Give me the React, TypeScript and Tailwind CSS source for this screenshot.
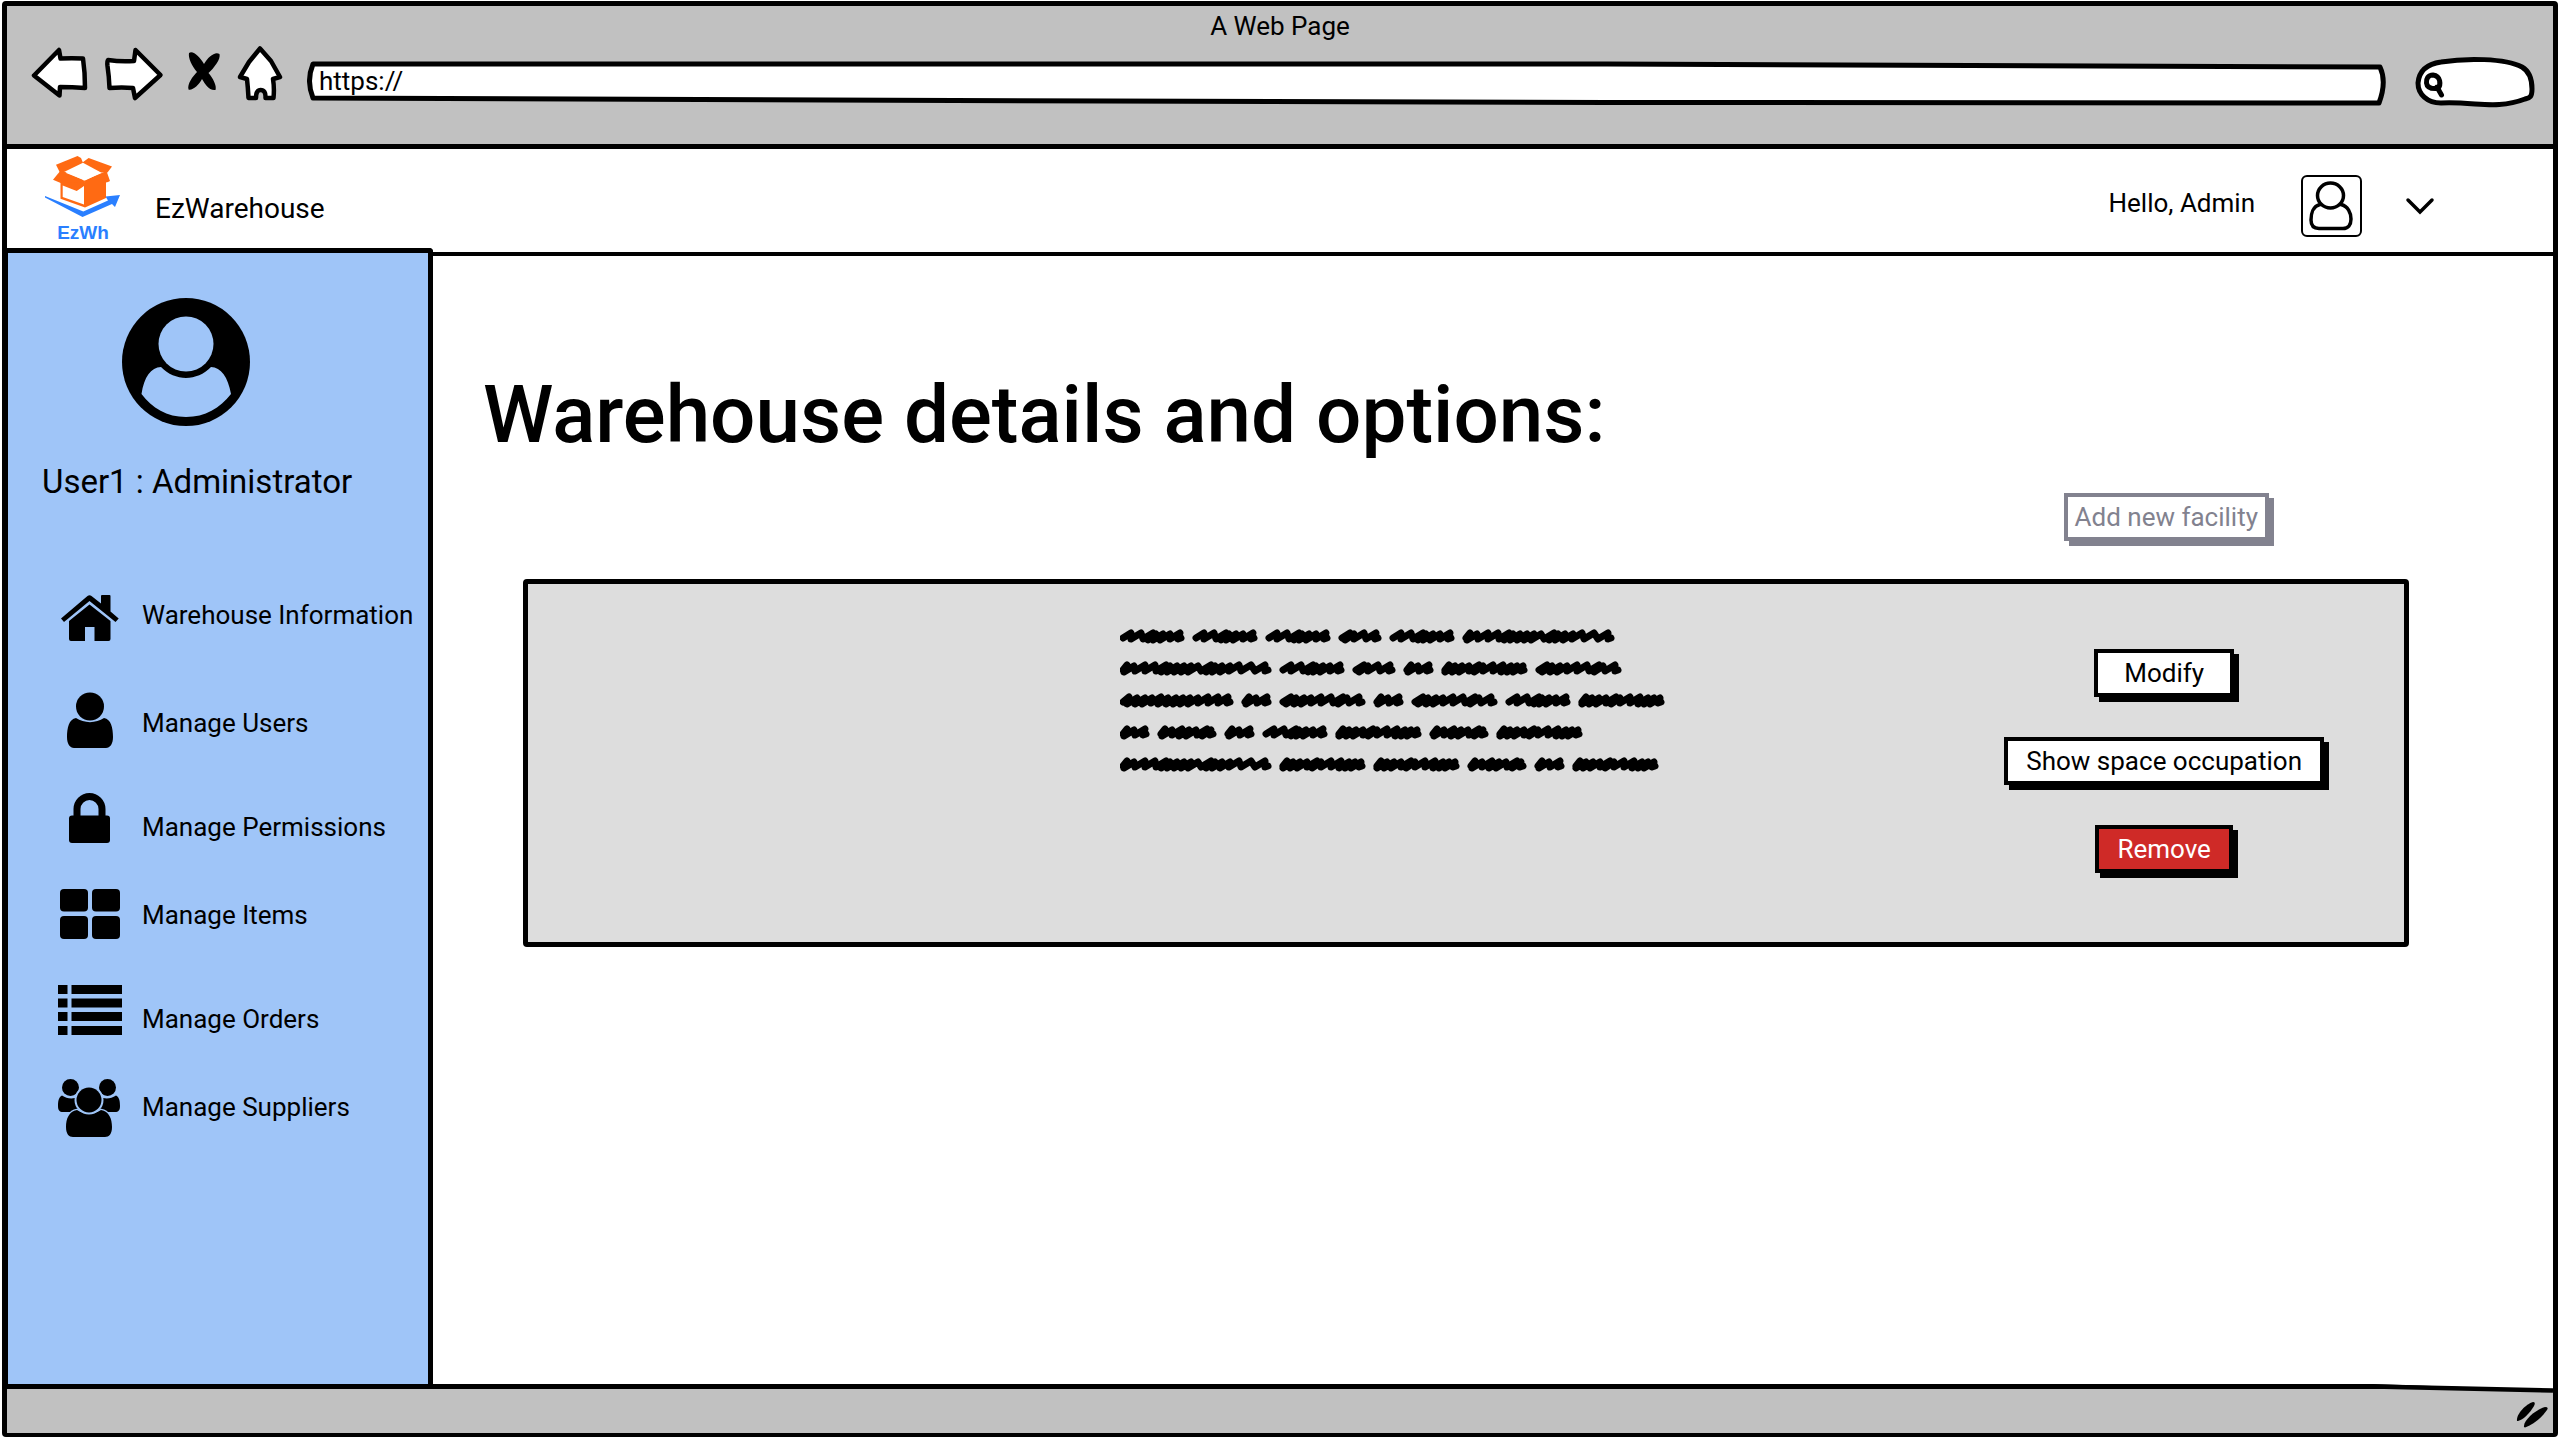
import type { ReactNode } from "react";

/* ---------- browser toolbar drawings ---------- */

function BackIcon() {
  return (
    <svg viewBox="31 44 60 64" className="h-16 w-[60px]" aria-hidden="true">
      <path d="M34 75.5 L59 50 L60.5 58.5 Q72 58 83 58.5 Q85 72 85 88 Q72 87 60 87 L59.500 95.500 Z" fill="#fff" stroke="#000" strokeWidth="4.500" strokeLinejoin="round" />
    </svg>
  );
}

function ForwardIcon() {
  return (
    <svg viewBox="103 44 64 64" className="h-16 w-16" aria-hidden="true">
      <path d="M108 60 Q121 62 134 61 L135.500 50 L160.500 75 L135 98 L133 88 Q122 87 109.500 88 Q109 76 107.500 66 Q107 61 108 60 Z" fill="#fff" stroke="#000" strokeWidth="4.500" strokeLinejoin="round" />
    </svg>
  );
}

function StopIcon() {
  return (
    <svg viewBox="179 44 44 64" className="h-16 w-11" aria-hidden="true">
      <path d="M189 53 C193 50 200 57 204 64 C208 57 215 51 219.500 54 C221 59 214 68 208.500 73 C213 78 217 86 215.500 90 C209 91 205 84 202 79 C199 85 192 91 188.500 89.500 C187 84 193 76 197 72 C192 66 188 58 189 53 Z" fill="#000" />
    </svg>
  );
}

function HomeIcon() {
  return (
    <svg viewBox="235 44 52 64" className="h-16 w-13" aria-hidden="true">
      <path d="M260 48.500 L271 61 L280 77 L273 79 Q274.500 88 273.500 98 L265.500 98 Q266 90 260.500 90 Q256 90 256 98 L248.500 98 Q248 88 247 79 L240 77 L249 62 Z" fill="#fff" stroke="#000" strokeWidth="4.500" strokeLinejoin="round" />
    </svg>
  );
}

function ToolbarButton({ label, children }: { label: string; children: ReactNode }) {
  return (
    <button type="button" aria-label={label} className="block">
      {children}
    </button>
  );
}

function BrowserBar() {
  return (
    <div className="border-b-[5px] border-black bg-[#c1c1c1] pt-1 pb-9">
      <div className="text-center text-[26px] leading-8">A Web Page</div>
      <div className="mt-0.5 flex gap-3 pr-4 pl-6">
        <ToolbarButton label="Back"><BackIcon /></ToolbarButton>
        <ToolbarButton label="Forward"><ForwardIcon /></ToolbarButton>
        <ToolbarButton label="Stop"><StopIcon /></ToolbarButton>
        <ToolbarButton label="Home"><HomeIcon /></ToolbarButton>
        <div className="relative mr-4 ml-2 h-16 flex-1">
          <svg viewBox="0 0 2080 64" preserveAspectRatio="none" className="absolute inset-0 h-full w-full" aria-hidden="true">
            <path d="M6 20 L1300 20 L2073 23 Q2080 38 2072 59 L1300 58.500 L800 57 L6 54 Q-1 37 6 20 Z" fill="#fff" stroke="#000" strokeWidth="5" strokeLinejoin="round" vectorEffect="non-scaling-stroke" />
          </svg>
          <input aria-label="Address" defaultValue="https://" className="relative block h-16 w-full bg-transparent px-3 pt-[10px] text-[26px] outline-none" />
        </div>
        <div className="relative h-16 w-[122px]">
          <svg viewBox="0 0 122 64" className="absolute inset-0" aria-hidden="true">
            <path d="M26 59 C12 59 3 50 3 39 C4 27 12 20 26 18 C50 14 90 14 107 23 C114 27 117 36 117 45 C117 54 114 54 110 55 C92 62 76 61 60 60 C48 59 36 58 26 59 Z" fill="#fff" stroke="#000" strokeWidth="5" strokeLinejoin="round" />
            <path d="M18 31 C13 31 11 35 11.500 39 C12 44 17 45 23 44.500 C26 41 26 32 18 31 Z M22 43 L26.500 51" fill="none" stroke="#000" strokeWidth="5" strokeLinecap="round" strokeLinejoin="round" />
          </svg>
          <input type="search" aria-label="Search" className="relative block h-16 w-full bg-transparent pt-[10px] pr-3 pl-8 text-xl outline-none" />
        </div>
      </div>
    </div>
  );
}

/* ---------- application header ---------- */

function Logo() {
  return (
    <div className="ml-9 w-20">
      <svg viewBox="43 153 80 64" className="block h-16 w-20" aria-hidden="true">
        <g fill="#ff6a13">
          <path d="M56 164.700 L77.500 156 L81 158 L83 162.700 L65 171.500 L60 172.700 Z" />
          <path d="M88.600 158 L112 166.500 L107.500 172.500 L101 172.500 L82.500 162.500 Z" />
          <path d="M61 170 L83.500 180 L85 184 L76.700 189.700 L53 179.700 Z" />
          <path d="M84 180.500 L106.500 171 L110 181 L108 182 L106 182.500 V198 L85 207.500 Z" />
          <path d="M60.500 182 V198.700 L85 207.500 V183 Z" />
        </g>
        <path d="M84 165.500 L101 172.700 L85 180.500 L65.500 172.700 Z" fill="#fff" />
        <path d="M62.700 185.500 L76.700 191 L84 186 V204.500 L62.700 197 Z" fill="#fff" />
        <path d="M45 196 L83.300 211.500 L108 200.500 L105.500 196.500 L120 195 L115 207 L112 204 L82.500 217 L45 197.500 Z" fill="#2a7fff" />
      </svg>
      <div className="mt-1 text-center font-['Liberation_Sans'] text-[19px] leading-6 font-bold text-[#2a7fff]">EzWh</div>
    </div>
  );
}

function AppHeader() {
  return (
    <header className="flex h-[99px] items-center">
      <Logo />
      <div className="mt-5 ml-8 text-[28px] leading-8">EzWarehouse</div>
      <div className="mr-[118px] ml-auto flex items-center pt-[15px]">
        <div className="pb-[7px] text-[26px] leading-8">Hello, Admin</div>
        <button type="button" aria-label="Profile" className="ml-[46px] rounded-md border-2 border-black">
          <svg viewBox="2304 177 57 58" className="block h-[58px] w-[57px]" fill="#fff" stroke="#000" strokeWidth="3.500" aria-hidden="true">
            <path d="M2321 204.500 C2314 206 2312 214 2312 220 C2312 226 2315 228.500 2320 228.500 H2344 C2349 228.500 2352 225 2352 219 C2352 213 2349 206 2342 204.500 Z" />
            <ellipse cx="2331.500" cy="195.500" rx="13" ry="12.500" />
          </svg>
        </button>
        <button type="button" aria-label="Open user menu" className="ml-[43px]">
          <svg viewBox="0 0 30 20" className="block h-5 w-[30px]" fill="none" stroke="#000" strokeWidth="3.500" strokeLinecap="round" aria-hidden="true">
            <path d="M3 4 L15 16 L27 4" />
          </svg>
        </button>
      </div>
    </header>
  );
}

/* ---------- sidebar ---------- */

const navItems: { label: string; gap: string; viewBox: string; icon: ReactNode }[] = [
  {
    label: "Warehouse Information",
    gap: "",
    viewBox: "54 579 72 72",
    icon: (
      <>
        <path d="M61 618.500 L87.500 596 Q89.500 594.500 91.500 596 L101 603.500 V596 Q101 595 102 595 H109.500 Q110.500 595 110.500 596 V611.500 L118.700 618.500 L115.500 622 L89.500 601 L64 622 Z" />
        <path d="M89.500 604.500 L110.500 621 V639 Q110.500 641 108.500 641 H94.500 V627 H85 V641 H71 Q69 641 69 639 V621 Z" />
      </>
    ),
  },
  {
    label: "Manage Users",
    gap: "mt-9",
    viewBox: "54 687 72 72",
    icon: (
      <>
        <circle cx="90" cy="706.500" r="14" />
        <path d="M76 718 C69 719 67 728 67 737 C67 744 70 748 74 748 H106 C110 748 113 744 113 737 C113 728 111 719 104 718 C96 723.500 84 723.500 76 718 Z" />
      </>
    ),
  },
  {
    label: "Manage Permissions",
    gap: "mt-8",
    viewBox: "54 791 72 72",
    icon: (
      <>
        <rect x="69" y="815.500" width="41" height="27.500" rx="3" />
        <path d="M77 818 V809 A12.500 12.500 0 0 1 102 809 V818" fill="none" stroke="#000" strokeWidth="7" />
      </>
    ),
  },
  {
    label: "Manage Items",
    gap: "mt-4",
    viewBox: "54 879 72 72",
    icon: (
      <>
        <rect x="60" y="889" width="28" height="22.500" rx="4" />
        <rect x="92" y="889" width="28" height="22.500" rx="4" />
        <rect x="60" y="916" width="28" height="23" rx="4" />
        <rect x="92" y="916" width="28" height="23" rx="4" />
      </>
    ),
  },
  {
    label: "Manage Orders",
    gap: "mt-8",
    viewBox: "54 983 72 72",
    icon: (
      <path d="M58 985 h9.500 v9 h-9.500 Z M71.500 985 h50.500 v9 h-50.500 Z M58 998.500 h9.500 v9 h-9.500 Z M71.500 998.500 h50.500 v9 h-50.500 Z M58 1012 h9.500 v9 h-9.500 Z M71.500 1012 h50.500 v9 h-50.500 Z M58 1026 h9.500 v9 h-9.500 Z M71.500 1026 h50.500 v9 h-50.500 Z" />
    ),
  },
  {
    label: "Manage Suppliers",
    gap: "mt-4",
    viewBox: "54 1071 72 72",
    icon: (
      <>
        <circle cx="70.500" cy="1087.500" r="8.500" />
        <circle cx="107.500" cy="1087.500" r="8.500" />
        <path d="M62 1095.500 C58.500 1097 58 1102 58 1106 C58 1110 59.500 1112 63 1112 H80 V1098 H75 C70 1099 66 1098 62 1095.500 Z" />
        <path d="M116 1095.500 C119.500 1097 120 1102 120 1106 C120 1110 118.500 1112 115 1112 H98 V1098 H103 C108 1099 112 1098 116 1095.500 Z" />
        <path d="M77 1110 C69 1111 66 1119 66 1127 C66 1134 69 1137 73 1137 H105 C109 1137 112 1134 112 1127 C112 1119 109 1111 101 1110 C93 1115 85 1115 77 1110 Z" stroke="#9fc5f8" strokeWidth="2.500" paintOrder="stroke" />
        <circle cx="89" cy="1100" r="12.500" stroke="#9fc5f8" strokeWidth="4" paintOrder="stroke" />
      </>
    ),
  },
];

function Sidebar() {
  return (
    <aside className="w-[426px] shrink-0 rounded-tr-sm border-t-[5px] border-r-[5px] border-l border-black bg-[#9fc5f8]">
      <svg viewBox="122 298 128 128" className="mt-[45px] ml-[114px] block size-32" role="img" aria-label="User avatar">
        <circle cx="186" cy="362" r="64" />
        <circle cx="186" cy="344" r="27.500" fill="#9fc5f8" />
        <path d="M141.500 394 C144 377 151 367.500 161 367 C175 381.500 197 381.500 211 367 C221 367.500 228 377 231 394 C220 408 205 417 186 417 C167 417 152 408 141.500 394 Z" fill="#9fc5f8" />
      </svg>
      <div className="mt-9 ml-[34px] text-[33px] leading-10">User1 : Administrator</div>
      <nav className="mt-[77px]">
        <ul>
          {navItems.map((item) => (
            <li key={item.label} className={item.gap}>
              <a href="#" className="flex h-[72px] items-center gap-4 pl-[46px] text-[26px] leading-8 whitespace-nowrap">
                <svg viewBox={item.viewBox} className="size-[72px] shrink-0" aria-hidden="true">
                  {item.icon}
                </svg>
                {item.label}
              </a>
            </li>
          ))}
        </ul>
      </nav>
    </aside>
  );
}

/* ---------- scribbled placeholder text ---------- */

/* Each word shape: total width and the x positions of its upward pen strokes. */
const wordShapes: Record<string, { width: number; peaks: number[] }> = {
  a: { width: 29, peaks: [7, 14, 25] },
  b: { width: 42, peaks: [11, 15, 25, 37] },
  c: { width: 64, peaks: [11, 21, 33, 36, 43, 50, 60] },
  d: { width: 58, peaks: [7, 14, 24, 31, 38, 49, 53] },
  e: { width: 85, peaks: [7, 13, 20, 27, 37, 41, 51, 61, 69, 75, 81] },
  g: { width: 85, peaks: [11, 16, 24, 31, 41, 51, 63, 67, 79] },
  h: { width: 113, peaks: [9, 17, 25, 32, 41, 48, 56, 63, 70, 78, 88, 98, 108] },
  f: { width: 151, peaks: [7, 14, 25, 35, 46, 50, 57, 64, 71, 78, 91, 95, 102, 110, 119, 131, 145] },
};

const scribbleLines = ["cccbcf", "fcbaeg", "hagagce", "adacede", "feedae"];

function wordPath(left: number, top: number, key: string) {
  const { width, peaks } = wordShapes[key];
  let d = "";
  peaks.forEach((peak, i) => {
    const prev = i === 0 ? 3 : peaks[i - 1] - 5;
    const valley = Math.max(prev, peak - 10);
    const tight = i > 0 && peak - peaks[i - 1] < 9;
    const low = top + (i === 0 ? 9 : tight ? 11 : 10);
    const high = top + (tight ? 5 : 4);
    d += `${i === 0 ? "M" : "L"}${left + valley} ${low}L${left + peak} ${high}`;
  });
  return `${d}L${left + width - 6} ${top + 10}L${left + width - 3} ${top + 9}`;
}

function Scribble() {
  const d = scribbleLines
    .map((line, row) => {
      let x = 0;
      return line
        .split("")
        .map((key) => {
          const path = wordPath(x, row * 32, key);
          x += wordShapes[key].width + 9;
          return path;
        })
        .join("");
    })
    .join("");
  return (
    <svg viewBox="0 0 560 144" className="mt-[45px] h-36 w-[560px] shrink-0" role="img" aria-label="Warehouse description">
      <path d={d} fill="none" stroke="#000" strokeWidth="7" strokeLinecap="round" strokeLinejoin="round" />
    </svg>
  );
}

/* ---------- main area ---------- */

const buttonBase = "h-12 border-4 text-[26px] leading-8 whitespace-nowrap";

function Content() {
  return (
    <main className="mt-1 flex-1 border-t-4 border-black">
      <h1 className="mt-[111px] ml-[50px] text-[80px] leading-24 font-medium">Warehouse details and options:</h1>
      <div className="mt-[30px] mr-[284px] flex justify-end">
        <button type="button" disabled className={`${buttonBase} border-[#82828f] bg-white px-[7px] text-[#82828f] shadow-[5px_5px_0_#82828f]`}>
          Add new facility
        </button>
      </div>
      <section className="mt-[38px] mr-36 ml-[90px] flex items-start rounded border-[5px] border-black bg-[#dddddd]">
        <div className="w-[592px] shrink" />
        <Scribble />
        <div className="mr-20 ml-auto flex flex-col items-center gap-10 pt-[65px] pb-[69px]">
          <button type="button" className={`${buttonBase} border-black bg-white px-[26px] shadow-[5px_5px_0_#000]`}>Modify</button>
          <button type="button" className={`${buttonBase} border-black bg-white px-[18px] shadow-[5px_5px_0_#000]`}>Show space occupation</button>
          <button type="button" className={`${buttonBase} border-black bg-[#cf2a27] px-[18px] text-white shadow-[5px_5px_0_#000]`}>Remove</button>
        </div>
      </section>
    </main>
  );
}

function StatusBar() {
  return (
    <footer className="relative flex h-[49px] items-center justify-end border-t-[5px] border-black bg-[#c1c1c1] pt-1.5">
      <svg viewBox="0 0 180 9" className="absolute -top-[5px] right-0 h-[9px] w-[180px]" aria-hidden="true">
        <path d="M0 0 H180 V6 Z" fill="#fff" />
        <path d="M0 2.500 L180 6.500" stroke="#000" strokeWidth="4.500" />
      </svg>
      <svg viewBox="2513 1398 36 32" className="mr-1 h-8 w-9" aria-hidden="true">
        <path d="M2517 1421 C2516 1414 2526 1404 2533 1402 Q2536 1402 2534 1406 C2530 1413 2523 1420 2518 1421 Z" />
        <path d="M2524 1427 C2523 1420 2537 1409 2545 1407 Q2549 1407 2547 1410 C2541 1419 2532 1425 2525 1427.500 Z" />
      </svg>
    </footer>
  );
}

export default function App() {
  return (
    <div className="flex min-h-screen flex-col bg-white px-0.5 pt-px pb-[3px] font-[Roboto,'Liberation_Sans',Arial,sans-serif] font-[450] text-black">
      <div className="flex flex-1 flex-col rounded-sm border-[5px] border-b-4 border-black">
        <BrowserBar />
        <AppHeader />
        <div className="flex flex-1">
          <Sidebar />
          <Content />
        </div>
        <StatusBar />
      </div>
    </div>
  );
}
